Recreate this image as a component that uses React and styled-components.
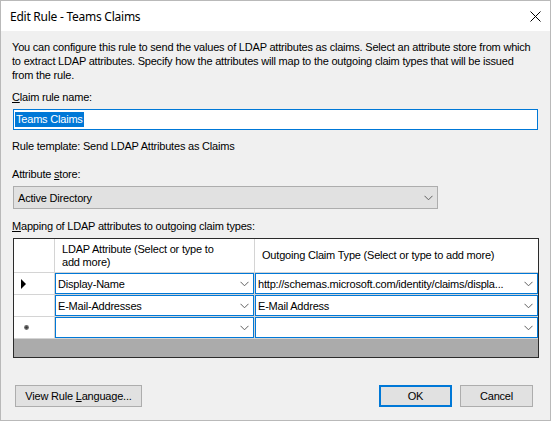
import React from "react";
import styled, { createGlobalStyle } from "styled-components";

const Global = createGlobalStyle`
  html, body { margin: 0; padding: 0; background: #f0f0f0; }
  * { box-sizing: border-box; }
`;

const Window = styled.div`
  width: 551px;
  height: 421px;
  border: 1px solid #b9b9b9;
  background: #f0f0f0;
  display: flex;
  flex-direction: column;
  font-family: "Microsoft Sans Serif", "Liberation Sans", Arial, sans-serif;
  font-size: 11px;
  letter-spacing: -0.2px;
  color: #000;
  overflow: hidden;
`;

const TitleBar = styled.div`
  height: 30px;
  background: #fff;
  display: flex;
  align-items: center;
  justify-content: space-between;
  padding: 0 0 0 9px;
  flex-shrink: 0;
`;

const Title = styled.span`
  font-family: "Segoe UI", "Noto Sans", sans-serif;
  font-size: 12px;
  letter-spacing: -0.25px;
  color: #000;
`;

const CloseBtn = styled.div`
  width: 30px;
  height: 30px;
  display: flex;
  align-items: center;
  justify-content: center;
`;

const Content = styled.div`
  flex: 1;
  padding: 9px 12px 0 11px;
  display: flex;
  flex-direction: column;
`;

const Text = styled.div`
  line-height: 14px;
  margin-top: ${(p) => p.$mt || 0}px;
  white-space: nowrap;
`;

const Key = styled.span`
  text-decoration: underline;
  text-underline-offset: 1px;
`;

const TextBox = styled.div`
  margin-top: 5px;
  margin-left: 1px;
  width: 525px;
  height: 21px;
  background: #fff;
  border: 1px solid #0078d7;
  display: flex;
  align-items: center;
  padding-left: 1px;
`;

const Selected = styled.span`
  background: #0078d7;
  color: #fff;
  line-height: 15px;
  padding: 0 1px;
`;

const Combo = styled.div`
  margin-top: 5px;
  margin-left: 1px;
  width: 425px;
  height: 23px;
  background: #e1e1e1;
  border: 1px solid #adadad;
  display: flex;
  align-items: center;
  justify-content: space-between;
  padding: 0 4px 0 4px;
`;

const Grid = styled.div`
  margin-top: 5px;
  margin-left: 1px;
  width: 526px;
  height: 120px;
  border: 1px solid #2b2b2b;
  background: #ababab;
  display: flex;
  flex-direction: column;
`;

const Rows = styled.div`
  display: grid;
  grid-template-columns: 40px 199px 1fr;
  grid-auto-rows: 21px;
  grid-template-rows: 33px;
  gap: 1px;
  background: #d4d4d4;
  padding-bottom: 1px;
`;

const HeadCell = styled.div`
  background: #fff;
  display: flex;
  align-items: center;
  padding: 0 8px 0 7px;
  line-height: 13px;
  white-space: nowrap;
`;

const RowHead = styled.div`
  background: #fff;
  display: flex;
  align-items: center;
  padding-left: 7px;
`;

const Cell = styled.div`
  background: #fff;
  border: 1px solid #0078d7;
  display: flex;
  align-items: center;
  justify-content: space-between;
  padding: 0 4px 0 2px;
  white-space: nowrap;
  overflow: hidden;
`;

const CellText = styled.span`
  min-width: 0;
  flex: 1;
`;

const Footer = styled.div`
  margin-top: 27px;
  display: flex;
  align-items: center;
  padding-left: 3px;
`;

const Button = styled.div`
  width: ${(p) => p.$w}px;
  height: 22px;
  background: #e1e1e1;
  border: ${(p) => (p.$default ? "2px solid #0078d7" : "1px solid #adadad")};
  display: flex;
  align-items: center;
  justify-content: center;
  margin-left: ${(p) => p.$ml || 0}px;
  white-space: nowrap;
`;

const Chevron = () => (
  <svg width="9" height="6" viewBox="0 0 9 6" style={{ flexShrink: 0, marginLeft: 4 }}>
    <path d="M0.5 0.8 L4.5 4.8 L8.5 0.8" fill="none" stroke="#606060" strokeWidth="1" />
  </svg>
);

const Arrow = () => (
  <svg width="6" height="10" viewBox="0 0 6 10">
    <path d="M0 0 L5 5 L0 10 Z" fill="#000" />
  </svg>
);

const NewRow = () => (
  <svg width="7" height="7" viewBox="0 0 7 7" style={{ marginLeft: 2 }}>
    <circle cx="3.5" cy="3.5" r="2.4" fill="#666" />
    <circle cx="3.5" cy="3.5" r="1.1" fill="#333" />
  </svg>
);

export default function App() {
  return (
    <>
      <Global />
      <Window>
        <TitleBar>
          <Title>Edit Rule - Teams Claims</Title>
          <CloseBtn>
            <svg width="11" height="11" viewBox="0 0 11 11">
              <path d="M0.5 0.5 L10.5 10.5 M10.5 0.5 L0.5 10.5" stroke="#000" strokeWidth="1" />
            </svg>
          </CloseBtn>
        </TitleBar>
        <Content>
          <Text>
            You can configure this rule to send the values of LDAP attributes as claims. Select an attribute store from which
            <br />
            to extract LDAP attributes. Specify how the attributes will map to the outgoing claim types that will be issued
            <br />
            from the rule.
          </Text>
          <Text $mt={8}>
            <Key>C</Key>laim rule name:
          </Text>
          <TextBox>
            <Selected>Teams Claims</Selected>
          </TextBox>
          <Text $mt={9}>Rule template: Send LDAP Attributes as Claims</Text>
          <Text $mt={14}>
            Attribute <Key>s</Key>tore:
          </Text>
          <Combo>
            <span>Active Directory</span>
            <Chevron />
          </Combo>
          <Text $mt={10}>
            <Key>M</Key>apping of LDAP attributes to outgoing claim types:
          </Text>
          <Grid>
            <Rows>
              <RowHead />
              <HeadCell>
                LDAP Attribute (Select or type to
                <br />
                add more)
              </HeadCell>
              <HeadCell>Outgoing Claim Type (Select or type to add more)</HeadCell>

              <RowHead>
                <Arrow />
              </RowHead>
              <Cell>
                <CellText>Display-Name</CellText>
                <Chevron />
              </Cell>
              <Cell>
                <CellText>http://schemas.microsoft.com/identity/claims/displa...</CellText>
                <Chevron />
              </Cell>

              <RowHead />
              <Cell>
                <CellText>E-Mail-Addresses</CellText>
                <Chevron />
              </Cell>
              <Cell>
                <CellText>E-Mail Address</CellText>
                <Chevron />
              </Cell>

              <RowHead>
                <NewRow />
              </RowHead>
              <Cell>
                <CellText />
                <Chevron />
              </Cell>
              <Cell>
                <CellText />
                <Chevron />
              </Cell>
            </Rows>
          </Grid>
          <Footer>
            <Button $w={127}>
              View Rule&nbsp;<Key>L</Key>anguage...
            </Button>
            <Button $w={73} $default $ml={237}>
              OK
            </Button>
            <Button $w={73} $ml={8}>
              Cancel
            </Button>
          </Footer>
        </Content>
      </Window>
    </>
  );
}
